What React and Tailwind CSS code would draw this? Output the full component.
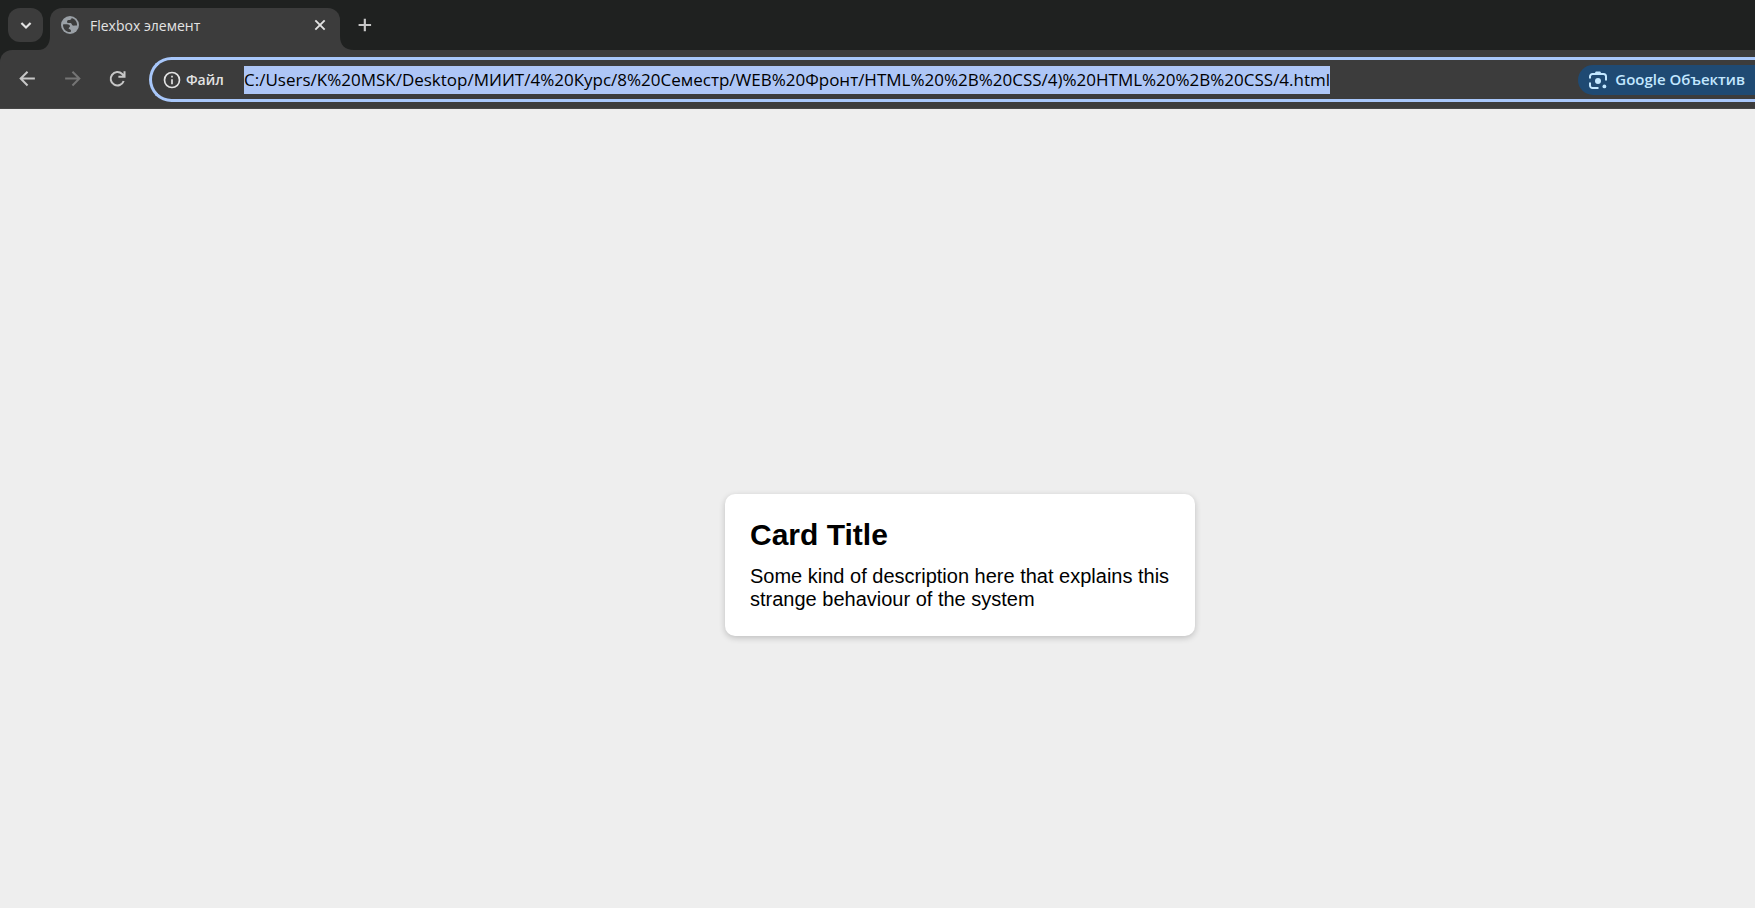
const URL_TEXT =
  'C:/Users/K%20MSK/Desktop/МИИТ/4%20Курс/8%20Семестр/WEB%20Фронт/HTML%20%2B%20CSS/4)%20HTML%20%2B%20CSS/4.html';

function Icon({ children, className, width = 2 }) {
  return (
    <svg viewBox="0 0 24 24" fill="none" stroke="currentColor" strokeWidth={width} className={className} aria-hidden="true">
      {children}
    </svg>
  );
}

function Globe() {
  return (
    <svg viewBox="0 0 18 18" className="size-[18px] shrink-0" aria-hidden="true">
      <circle cx="9" cy="9" r="9" fill="#9aa0a6" />
      <path
        d="M10.6 2C10.6 3.6 9.4 4 7.6 4C6.2 4.2 6 5.2 6 6.2C6.2 7.2 8 6.8 9.6 7C11 7.2 10.6 9 11.8 9.6C13.2 10 14.2 9.2 16 9.6C16.4 5.8 14 2.8 10.6 2Z"
        fill="#3c3c3c"
      />
      <path
        d="M2 8.4C4.2 8.3 8.4 8 9 10C9.2 11.4 7.4 11.4 7.6 12.6C8 13.6 9.8 13.2 10 14.4C10.1 15.2 9.8 15.8 9.2 16C5.2 16.2 1.8 12.8 2 8.4Z"
        fill="#3c3c3c"
      />
    </svg>
  );
}

function Lens() {
  return (
    <svg viewBox="0 0 18 18" fill="none" className="size-[18px] shrink-0" aria-hidden="true">
      <path
        d="M1 7.5V5.5A2.5 2.5 0 0 1 3.5 3H14.5A2.5 2.5 0 0 1 17 5.5V9.5M1 11.5V14.5A2.5 2.5 0 0 0 3.5 17H9.5"
        stroke="#c2e7ff"
        strokeWidth="2"
      />
      <path d="M5.2 3L6.8 0.6H11.2L12.8 3Z" fill="#c2e7ff" />
      <circle cx="9" cy="9.9" r="3" fill="#c2e7ff" />
      <circle cx="15.4" cy="15.4" r="1.9" fill="#c2e7ff" />
    </svg>
  );
}

function TabStrip() {
  return (
    <header className="flex h-[50px] bg-[#1f2120] pl-2">
      <button
        type="button"
        aria-label="Поиск вкладок"
        className="mt-2 flex h-[34px] w-[35px] shrink-0 items-center justify-center rounded-xl bg-[#3c3c3c] text-[#e3e3e3]"
      >
        <Icon className="size-5" width={2.6}>
          <path d="M6.5 9.5L12 15L17.5 9.5" />
        </Icon>
      </button>
      <div className="flex w-[7px] items-end">
        <svg viewBox="0 0 12 14" className="-ml-[5px] h-[14px] w-3 shrink-0" aria-hidden="true">
          <path d="M12 0V14H0C8 14 12 8 12 0Z" fill="#3c3c3c" />
        </svg>
      </div>
      <div className="mt-2 flex w-[290px] shrink-0 items-start rounded-t-xl bg-[#3c3c3c] pl-[11px] pr-3">
        <div className="flex h-[34px] w-full items-center">
          <Globe />
          <span className="ml-[11px] flex-1 text-[14px] text-[#e3e3e3]">Flexbox элемент</span>
          <button type="button" aria-label="Закрыть вкладку" className="text-[#e3e3e3]">
            <Icon className="size-4" width={2.8}>
              <path d="M5 5L19 19M19 5L5 19" />
            </Icon>
          </button>
        </div>
      </div>
      <div className="flex items-end">
        <svg viewBox="0 0 14 14" className="size-[14px]" aria-hidden="true">
          <path d="M0 0V14H14C5 14 0 9 0 0Z" fill="#3c3c3c" />
        </svg>
      </div>
      <button type="button" aria-label="Новая вкладка" className="mt-2 flex h-[34px] items-center text-[#c7c7c7]">
        <Icon className="size-5" width={2.6}>
          <path d="M13 4.5V19.5M5.5 12H20.5" />
        </Icon>
      </button>
    </header>
  );
}

function Toolbar() {
  return (
    <div className="bg-[#1f2120]">
      <nav className="flex h-[59px] items-center rounded-tl-xl border-b border-[#474747] bg-[#3c3c3c] pl-[17px]">
        <button type="button" aria-label="Назад" className="text-[#c7c7c7]">
          <Icon className="size-[22px]" width={2.2}>
            <path d="M19.5 11.5H4.5M11.5 4L4 11.5L11.5 19" />
          </Icon>
        </button>
        <button type="button" aria-label="Вперёд" className="ml-[22px] text-[#757575]">
          <Icon className="size-[22px]" width={2.2}>
            <path d="M4.5 11.5H19.5M12.5 4L20 11.5L12.5 19" />
          </Icon>
        </button>
        <button type="button" aria-label="Обновить" className="ml-[23px] text-[#c7c7c7]">
          <Icon className="size-[22px]" width={2.2}>
            <path d="M19.3 14.2A7.3 7.3 0 1 1 17.6 6.6L20 9M20.2 3.5V9.6H13.5" />
          </Icon>
        </button>
        <div className="ml-[21px] mt-px flex h-[45px] min-w-0 flex-1 items-center rounded-l-full border-y-3 border-l-3 border-[#a8c7fa] pl-[10px]">
          <Icon className="size-5 shrink-0 text-[#e3e3e3]">
            <circle cx="12" cy="12" r="9" />
            <path d="M12 11V17M12 7V9" />
          </Icon>
          <label htmlFor="address" className="ml-1 w-[58px] shrink-0 text-[14px] font-semibold text-[#e3e3e3]">
            Файл
          </label>
          <input
            id="address"
            type="text"
            defaultValue={URL_TEXT}
            className="field-sizing-content h-7 min-w-0 bg-[#aec6f6] text-[17px] text-black outline-none"
          />
          <button
            type="button"
            className="ml-auto flex h-[30px] shrink-0 items-center gap-2 whitespace-nowrap rounded-l-full bg-[#1f4a73] pl-[11px] pr-[10px] text-[15px] font-semibold text-[#c2e7ff]"
          >
            <Lens />
            Google Объектив
          </button>
        </div>
      </nav>
    </div>
  );
}

export default function App() {
  return (
    <div className="flex min-h-screen flex-col bg-[#eeeeee] font-['Open_Sans','Noto_Sans',sans-serif]">
      <TabStrip />
      <Toolbar />
      <main className="flex flex-1 items-center justify-center pl-[165px] pt-[113px] font-['Liberation_Sans',Arial,sans-serif] text-black">
        <article className="w-full max-w-[470px] rounded-[10px] bg-white p-[25px] shadow-[0_2px_6px_rgba(0,0,0,0.2)]">
          <h1 className="text-[30px] leading-8 font-bold">Card Title</h1>
          <p className="mt-[14px] text-[20px] leading-[23px]">
            Some kind of description here that explains this strange behaviour of the system
          </p>
        </article>
      </main>
    </div>
  );
}
